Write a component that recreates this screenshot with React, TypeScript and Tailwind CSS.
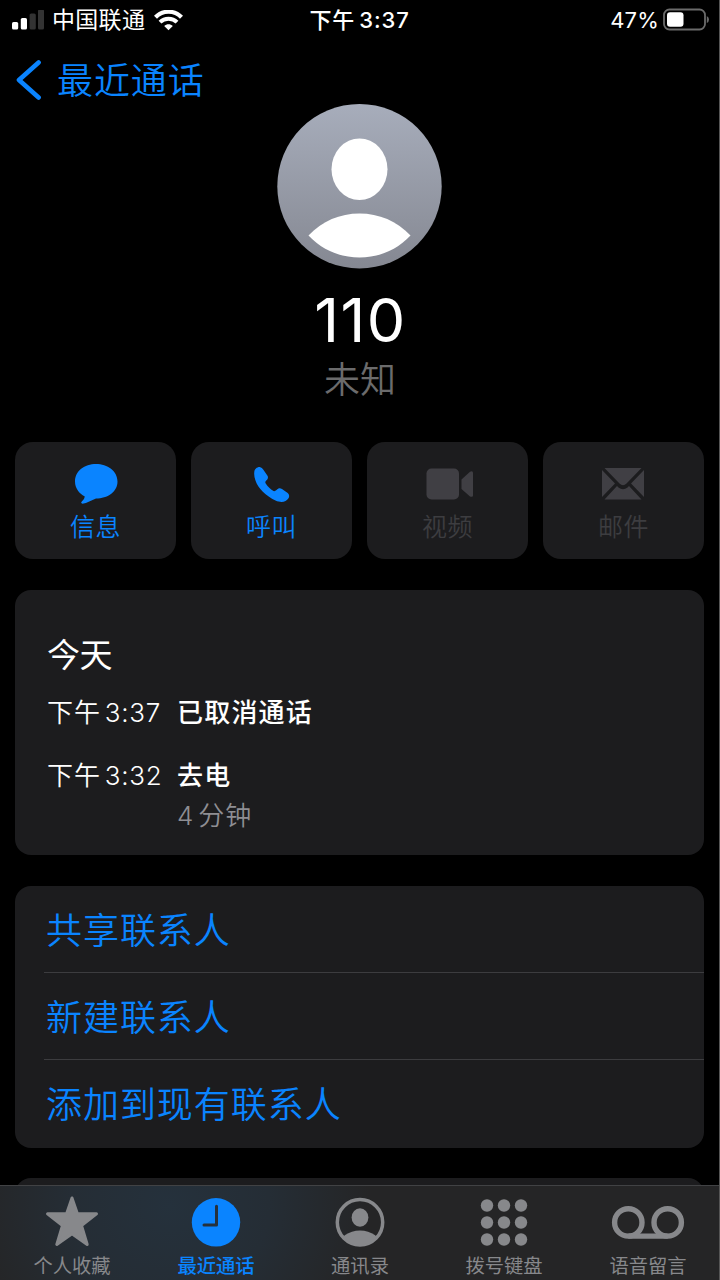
import type { ReactNode } from "react";

const FONT = "font-['Inter','Noto_Sans_CJK_SC',sans-serif]";

function StatusBar() {
  return (
    <header className="grid h-10 grid-cols-3 items-center text-[22px] leading-none text-white">
      <div className="flex items-center pl-3">
        <svg className="h-5 w-8 shrink-0" viewBox="0 0 32 20" fill="#fff">
          <rect x="0" y="12" width="6.2" height="7.5" rx="1.6" />
          <rect x="8.8" y="8" width="6.2" height="11.5" rx="1.6" />
          <rect x="17.6" y="3.5" width="6.2" height="16" rx="1.6" fill="#333" />
          <rect x="26" y="-0.5" width="6" height="20" rx="1.6" fill="#333" />
        </svg>
        <span className="ml-[8px] whitespace-nowrap pt-px text-[23px] tracking-[0.3px]">中国联通</span>
        <svg className="ml-[9px] h-[21px] w-[29px] shrink-0" viewBox="0 0 29 21">
          <path d="M1.5 7.2C8.6 -.1 20.4 -.1 27.5 7.2" fill="none" stroke="#fff" strokeWidth="4.200" />
          <path d="M6 12.1C10.700 7.500 18.300 7.500 23 12.100" fill="none" stroke="#fff" strokeWidth="4" />
          <path d="M14.500 20.200 10.200 16C12.700 13.700 16.300 13.700 18.800 16Z" fill="#fff" />
        </svg>
      </div>
      <div className="whitespace-nowrap pr-px text-center font-medium tracking-[0.9px]">下午<span className="ml-1">3:37</span></div>
      <div className="flex items-center justify-end pr-[11px]">
        <span className="tracking-[0.200px]">47%</span>
        <svg className="ml-1 h-[22px] w-[46px] overflow-visible" viewBox="0 0 46 22">
          <rect x="1" y="0.5" width="41" height="20" rx="5.500" fill="none" stroke="#6b6b6b" strokeWidth="1.800" />
          <rect x="4" y="3.300" width="16.500" height="14.400" rx="3" fill="#fff" />
          <path d="M43.800 7Q46 8 46 10.500T43.800 14Z" fill="#6b6b6b" />
        </svg>
      </div>
    </header>
  );
}

function Avatar() {
  return (
    <svg className="mr-px h-[165px] w-[165px] shrink-0" viewBox="0 0 165 165">
      <defs>
        <linearGradient id="avatar" x1="0" y1="0" x2="0" y2="1">
          <stop offset="0" stopColor="#a7adbb" />
          <stop offset="1" stopColor="#858892" />
        </linearGradient>
      </defs>
      <circle cx="82.5" cy="82.2" r="82.2" fill="url(#avatar)" />
      <ellipse cx="82.5" cy="65.2" rx="28" ry="30.8" fill="#fff" />
      <path d="M31.5 131.5C45 117 63 109.500 82.5 109.500S120 117 133.500 131.500C120 146 102 153.500 82.500 153.500S45 146 31.500 131.500Z" fill="#fff" />
    </svg>
  );
}

function Action({ label, off, children }: { label: string; off?: boolean; children: ReactNode }) {
  return (
    <button className={`flex flex-col items-center rounded-[18px] bg-[#1c1c1e] pt-5 ${off ? "text-[#403f44]" : "text-[#0a84ff]"}`}>
      <svg className="h-[42px] w-[50px] overflow-visible" viewBox="0 0 50 42" fill="currentColor">
        {children}
      </svg>
      <span className={`mt-[11px] text-[25px] font-[350] leading-6 tracking-[0.500px] ${off ? "text-[#3d3d40]" : ""}`}>{label}</span>
    </button>
  );
}

function Call({ time, kind, length }: { time: string; kind: string; length?: string }) {
  return (
    <div className="flex text-[26px] leading-10">
      <div className="w-[130px] whitespace-nowrap tracking-[0.900px]">
        <span className="font-[350]">下午</span>
        <span className="ml-1 font-[350] tracking-[0.700px]">{time}</span>
      </div>
      <div>
        <div className="font-medium tracking-[1.200px]">{kind}</div>
        {length && <div className="font-[350] tracking-[1px] text-[#8e8e93]">{length}<span className="ml-1">分钟</span></div>}
      </div>
    </div>
  );
}

function Tab({ label, active, children }: { label: string; active?: boolean; children: ReactNode }) {
  return (
    <button className={`flex flex-col items-center pt-2 ${active ? "text-[#0a84ff]" : "text-[#87888b]"}`}>
      <svg className="h-14 w-20" viewBox="0 0 80 56" fill="currentColor">
        {children}
      </svg>
      <span className={`mt-1.5 text-[19.300px] leading-5 ${active ? "font-medium" : "font-normal"}`}>{label}</span>
    </button>
  );
}

export default function App() {
  return (
    <div className={`relative flex h-[1280px] w-[720px] flex-col overflow-hidden bg-black ${FONT}`}>
      <div className="absolute inset-y-0 right-0 z-10 w-px bg-[#555]" />
      <StatusBar />
      <nav className="flex h-16 items-center pl-4 pt-4 text-[#0a84ff]">
        <svg className="h-10 w-7" viewBox="0 0 28 40" fill="none" stroke="currentColor" strokeWidth="4.600" strokeLinecap="round" strokeLinejoin="round">
          <path d="M22.600 2.500 3 20 22.600 37.500" />
        </svg>
        <span className="ml-[13px] pt-0.5 text-[36px] font-[350] leading-10 tracking-[0.900px]">最近通话</span>
      </nav>
      <section className="flex h-[338px] flex-col items-center">
        <Avatar />
        <h1 className="mt-[21px] pl-px text-[61px] leading-[60px] tracking-[1.400px] text-white">110</h1>
        <p className="mt-[8px] text-[36px] font-[350] leading-[44px] text-[#6b6b6c]">未知</p>
      </section>
      <section className="ml-[15px] mr-4 grid h-[117px] shrink-0 grid-cols-4 gap-[14.700px]">
        <Action label="信息">
          <path d="M25 2C36.500 2 46.500 9 46.500 19.500S36.500 36.500 25 36.500C20.500 38.500 16 41 11.500 41.800Q9.300 41.300 10.800 39.600Q13.500 37.500 13.800 34.500C8 31.500 4 26 4 19.500 4 9 13.500 2 25 2Z" />
        </Action>
        <Action label="呼叫">
          <path d="M7.300 10C7.300 7 10.800 4.500 13.300 5.200Q15 5.500 16.200 7.500L20.500 13.800C21.500 15.500 20.800 17 19.500 18.300Q17.600 19.800 18.700 21.500C21 25 24 27.500 26.500 29Q28 29.500 29.500 28C31.500 26 33 26 35 27L40.700 31C42.500 32.500 42.500 34.500 41.500 36.300C39 40.200 34 41 28.500 38.500C19 34 11 26.500 8.300 18Q6.800 13.500 7.300 10Z" />
        </Action>
        <Action label="视频" off>
          <rect x="4.500" y="6.500" width="32.500" height="31" rx="5" />
          <path d="M39.500 17.500 48 9.800Q51 8.500 51 11V33.500Q51 35.500 48 34.500L39.500 27Z" />
        </Action>
        <Action label="邮件" off>
          <path d="M6.500 6H43.500L28.500 21.500Q25 24.800 21.500 21.500ZM4 8 17 21.500 4 35ZM46 8V35L33 21.500ZM6.500 37.500 19 24 20.500 25.500Q25 29 29.500 25.500L31 24 43.500 37.500Z" />
        </Action>
      </section>
      <section className="ml-[15px] mr-4 mt-[31px] h-[265px] shrink-0 rounded-[16px] bg-[#1c1c1e] pl-8 pt-[44px] text-white">
        <h2 className="mb-[16px] text-[33px] font-normal leading-[43px] tracking-[-0.500px]">今天</h2>
        <Call time="3:37" kind="已取消通话" />
        <div className="h-[23px]" />
        <Call time="3:32" kind="去电" length="4" />
      </section>
      <section className="ml-[15px] mr-4 mt-[30.500px] h-[262px] shrink-0 rounded-[16px] bg-[#1c1c1e] pl-[29px] text-[36px] font-[350] tracking-[0.950px] text-[#0a84ff]">
        <div className="h-[87px] border-b border-[#3c3c3f] pl-[2px] leading-[90px]">共享联系人</div>
        <div className="h-[87px] border-b border-[#3c3c3f] pl-[2px] leading-[90px]">新建联系人</div>
        <div className="h-[88px] pl-[2px] leading-[91px]">添加到现有联系人</div>
      </section>
      <div className="ml-[15px] mr-4 mt-[30.500px] h-[7px] shrink-0 overflow-hidden">
        <div className="h-10 rounded-[16px] bg-[#1c1c1e]" />
      </div>
      <footer className="grid h-[95px] shrink-0 grid-cols-5 border-t border-[#414244] bg-[#252526] bg-[radial-gradient(ellipse_200px_180px_at_170px_20px,#25313c,#252d35_50%,#252526)]">
        <Tab label="个人收藏">
          <path d="M40 4 45.400 19.800H64.500L49.500 31.500 55.200 50.500 40 39.700 24.800 50.500 30.500 31.500 15.500 19.800H34.600Z" stroke="currentColor" strokeWidth="3" strokeLinejoin="round" />
        </Tab>
        <Tab label="最近通话" active>
          <circle cx="40" cy="28.300" r="24.200" />
          <path d="M40.500 12.300V30.900H28" fill="none" stroke="#26313c" strokeWidth="3" strokeLinecap="round" strokeLinejoin="round" />
        </Tab>
        <Tab label="通讯录">
          <defs><clipPath id="contact"><circle cx="40" cy="28.300" r="22.500" /></clipPath></defs>
          <circle cx="40" cy="28.300" r="22.700" fill="none" stroke="currentColor" strokeWidth="3.500" />
          <ellipse cx="40" cy="23.500" rx="8.400" ry="9.200" />
          <ellipse cx="40" cy="52" rx="21" ry="15.500" clipPath="url(#contact)" />
        </Tab>
        <Tab label="拨号键盘">
          {[11.500, 28.500, 45.500].map((y) =>
            [23, 40, 57].map((x) => <circle key={`${x}-${y}`} cx={x} cy={y} r="6.200" />),
          )}
        </Tab>
        <Tab label="语音留言">
          <g fill="none" stroke="currentColor" strokeWidth="5.400">
            <circle cx="20.300" cy="28.400" r="13.700" />
            <circle cx="59.700" cy="28.400" r="13.700" />
            <path d="M20.300 42.100H59.700" />
          </g>
        </Tab>
      </footer>
    </div>
  );
}
